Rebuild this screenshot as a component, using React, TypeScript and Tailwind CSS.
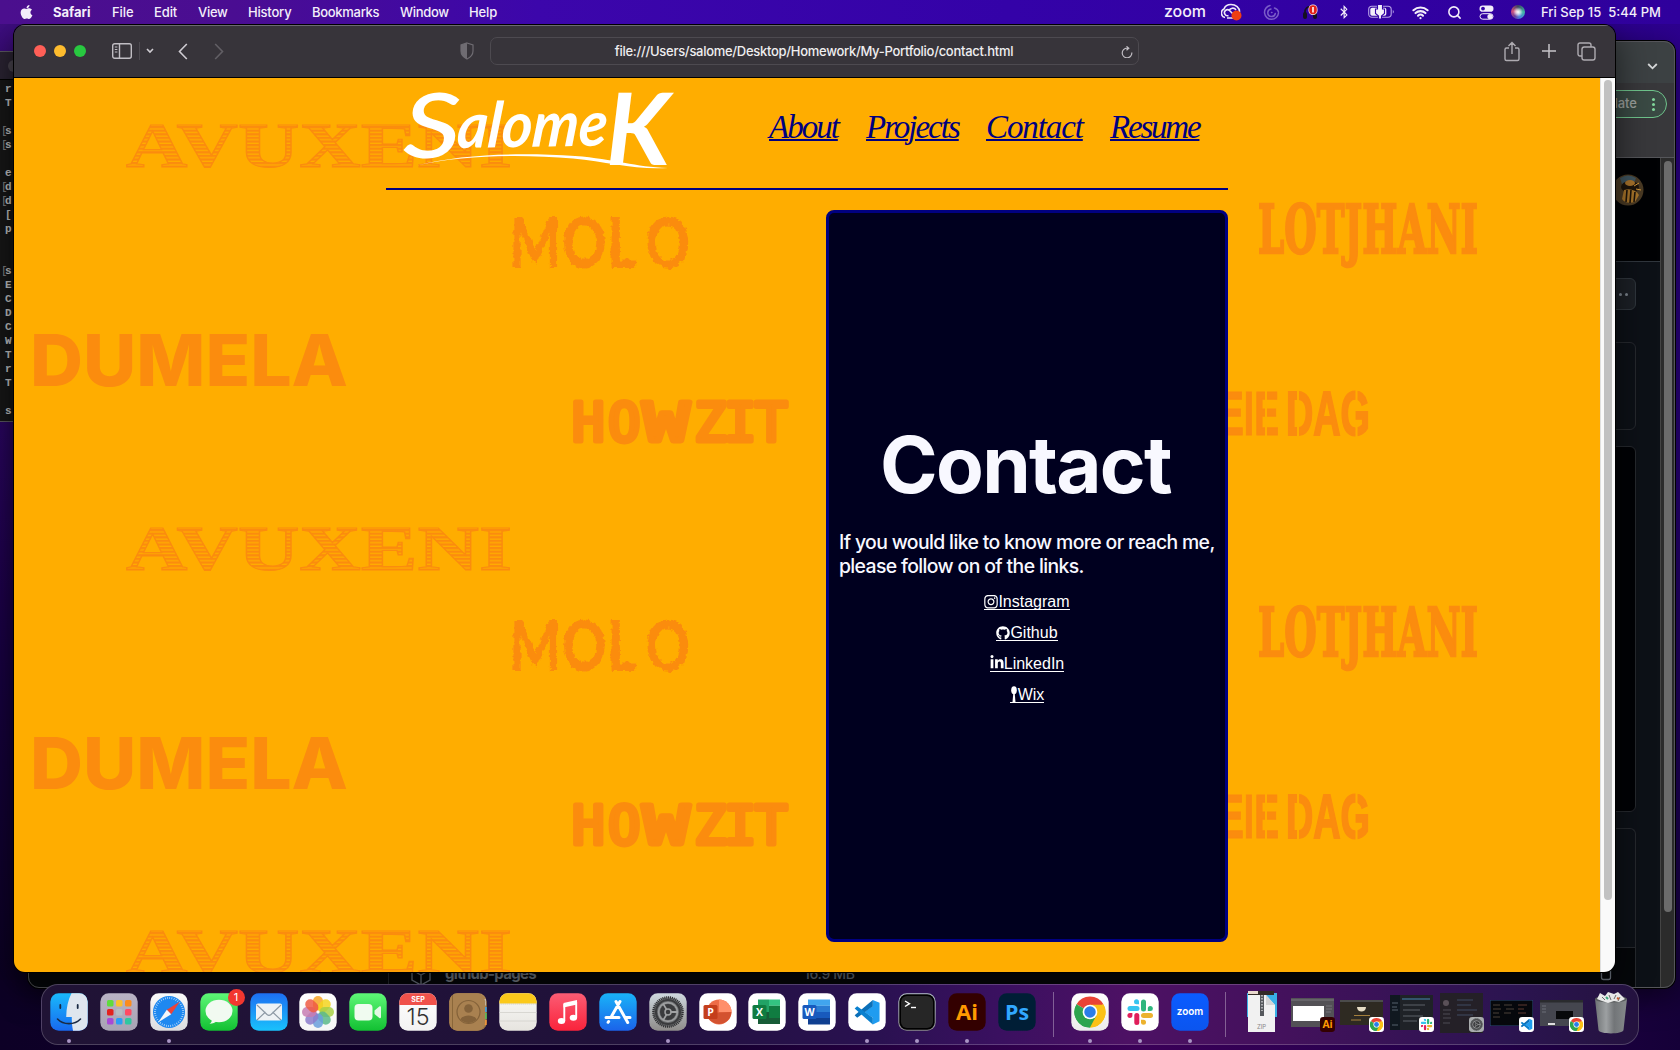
import React from "react";
import { FaInstagram, FaGithub, FaLinkedinIn, FaApple, FaBluetoothB } from "react-icons/fa";
import { Search, Wifi } from "lucide-react";

type P = { s?: number };

const Tile = ({ id, from, to, children }: { id: string; from: string; to: string; children?: React.ReactNode }) => (
  <svg width="38" height="38" viewBox="0 0 38 38" className="block shrink-0">
    <defs>
      <linearGradient id={id} x1="0" y1="0" x2="0" y2="1">
        <stop offset="0" stopColor={from} />
        <stop offset="1" stopColor={to} />
      </linearGradient>
    </defs>
    <rect x=".3" y=".3" width="37.4" height="37.4" rx="8.5" fill={`url(#${id})`} />
    {children}
  </svg>
);

const ChromeMark = ({ s = 30 }: P) => (
  <svg width={s} height={s} viewBox="0 0 30 30" x={19 - s / 2} y={19 - s / 2}>
    <path d="M15 15 L2.4 7.7 A14.5 14.5 0 0 1 27.6 7.7 Z" fill="#ea4335" />
    <path d="M15 15 L27.6 7.7 A14.5 14.5 0 0 1 15 29.5 Z" fill="#fbbc05" />
    <path d="M15 15 L15 29.5 A14.5 14.5 0 0 1 2.4 7.7 Z" fill="#34a853" />
    <path d="M15 8.2 H27.8 A14.5 14.5 0 0 1 15 29.5 L20.9 18.4 Z" fill="#fbc116" />
    <path d="M9.1 18.4 L2.4 7.7 A14.5 14.5 0 0 0 15 29.5 L20.9 18.4 Z" fill="#2da44e" />
    <circle cx="15" cy="15" r="6.9" fill="#fff" />
    <circle cx="15" cy="15" r="5.4" fill="#2b7de9" />
  </svg>
);

const SlackMark = ({ s = 26 }: P) => (
  <svg width={s} height={s} viewBox="0 0 26 26" x={19 - s / 2} y={19 - s / 2}>
    <g strokeWidth="5" strokeLinecap="round">
      <path d="M3 9.5h7" stroke="#36c5f0" />
      <path d="M16.5 3v7" stroke="#2eb67d" />
      <path d="M16.5 16.5h7" stroke="#ecb22e" />
      <path d="M9.8 16.5v7" stroke="#e01e5a" />
    </g>
    <path d="M9.8 5.3H9.5a2.5 2.5 0 1 1 2.5-2.5v2.5z" fill="#36c5f0" />
    <path d="M20.8 12V9.5a2.5 2.5 0 1 1 2.5 2.5z" fill="#2eb67d" />
    <path d="M14 20.8h2.5a2.5 2.5 0 1 1-2.5 2.5z" fill="#ecb22e" />
    <path d="M5.4 14v2.5A2.5 2.5 0 1 1 2.9 14z" fill="#e01e5a" />
  </svg>
);

const CodeMark = ({ s = 28 }: P) => (
  <svg width={s} height={s} viewBox="0 0 28 28" x={19 - s / 2} y={19 - s / 2}>
    <path d="M20 1.5 L27 4.5 V23.5 L20 27 V20 L11.5 14 20 7.8z" fill="#1f9cf0" />
    <path d="M20 1.5 L1.2 17.3 3.8 20 20 8z" fill="#0a6fb8" />
    <path d="M1.2 10.4 L3.8 8 20 20 V27z" fill="#0a80cf" />
  </svg>
);

const GearMark = () => (
  <g>
    <circle cx="19" cy="19" r="14.6" fill="#6d6f71" stroke="#2e2f31" strokeWidth="2.4" strokeDasharray="1.1 .8" />
    <circle cx="19" cy="19" r="12" fill="none" stroke="#3a3b3d" strokeWidth="2.2" />
    <circle cx="19" cy="19" r="9.4" fill="none" stroke="#9a9c9d" strokeWidth="1.6" />
    <circle cx="19" cy="19" r="8" fill="#3a3b3d" />
    <circle cx="19" cy="19" r="3" fill="none" stroke="#a0a2a3" strokeWidth="1.5" />
    <path d="M22 19h6.6M17.5 16.4l-3.4-5.8M17.5 21.6l-3.4 5.8" stroke="#a0a2a3" strokeWidth="1.8" />
  </g>
);

const Finder = () => (
  <Tile id="fi" from="#19b9fb" to="#1869f0">
    <path d="M21.5.3H29.2a8.5 8.5 0 0 1 8.5 8.5v20.4a8.5 8.5 0 0 1-8.5 8.5H23c-1-5-1.3-9-1.2-13.8h-5.6C16.4 15 18 7 21.5.3z" fill="#dfe6ee" />
    <path d="M10.3 12v3M27.7 12v3" stroke="#1a2a44" strokeWidth="1.8" strokeLinecap="round" />
    <path d="M7.5 26c6 6.2 17 6.2 23 0" fill="none" stroke="#1a2a44" strokeWidth="1.6" strokeLinecap="round" />
  </Tile>
);

const padColors = ["#5fdc3c", "#fbc02d", "#fb8c1e", "#e3221f", "#b6bcc2", "#ff4a63", "#a849d6", "#2b9df4", "#2fc7a0"];
const Launchpad = () => (
  <Tile id="lp" from="#b9b3c4" to="#a8a3b4">
    {padColors.map((c, i) => (
      <rect key={i} x={7 + (i % 3) * 9} y={7 + Math.floor(i / 3) * 9} width="6.5" height="6.5" rx="1.6" fill={c} />
    ))}
  </Tile>
);

const Safari = () => (
  <Tile id="sf" from="#fafafa" to="#dcdcdf">
    <circle cx="19" cy="19" r="16" fill="#1e88f0" />
    <circle cx="19" cy="19" r="14" fill="none" stroke="#d9ecff" strokeWidth="2" strokeDasharray=".6 1.6" />
    <path d="M30 8.5 L16.8 16.8 21.2 21.2z" fill="#ee4238" />
    <path d="M8 29.5 L16.8 16.8 21.2 21.2z" fill="#f4f6f8" />
  </Tile>
);

const Messages = () => (
  <Tile id="ms" from="#5ef777" to="#12c032">
    <ellipse cx="19" cy="18" rx="13.5" ry="11.3" fill="#f1faf1" />
    <path d="M12 26c0 2.5-1 3.8-2.5 4.7 3.5 0 5.5-1 7-2.7z" fill="#f1faf1" />
  </Tile>
);

const Mail = () => (
  <Tile id="ml" from="#1d6ff2" to="#19c2fc">
    <rect x="6" y="10.5" width="26" height="17" rx="2" fill="#eef2f5" />
    <path d="M7 12l10 9.5c1.3 1.1 2.7 1.1 4 0L31 12M7 27l8.5-8M31 27l-8.5-8" fill="none" stroke="#8b97a3" strokeWidth="1.1" />
  </Tile>
);

const petals = ["#f7a326", "#f3d51f", "#a8cf45", "#5cb98a", "#6a9fdc", "#8c7ccb", "#c77bb2", "#ee5a44"];
const Photos = () => (
  <Tile id="ph" from="#ffffff" to="#f6f6f6">
    {petals.map((c, i) => (
      <rect key={c} x="14" y="3" width="10" height="14.5" rx="5" fill={c} opacity=".85" transform={`rotate(${i * 45} 19 19)`} />
    ))}
  </Tile>
);

const FaceTime = () => (
  <Tile id="ft" from="#5ef777" to="#12c032">
    <rect x="5.5" y="11" width="18" height="16.5" rx="4" fill="#f0fbf0" />
    <path d="M25.5 17.5l4.8-4c1-.7 1.7-.3 1.7.8v9.8c0 1.1-.7 1.5-1.7.8l-4.8-4z" fill="#e3f8e5" />
  </Tile>
);

const Calendar = () => (
  <Tile id="cl" from="#ffffff" to="#f2f2f2">
    <path d="M.3 12V8.8A8.5 8.5 0 0 1 8.8.3h20.4a8.5 8.5 0 0 1 8.5 8.5V12z" fill="#f0524b" />
    <text x="19" y="9.2" textAnchor="middle" fontSize="7" fontWeight="700" fill="#fff" fontFamily="Inter, sans-serif">SEP</text>
    <text x="19" y="31.5" textAnchor="middle" fontSize="23" fontWeight="300" fill="#333" fontFamily="Inter, sans-serif" textLength="23" lengthAdjust="spacingAndGlyphs">15</text>
  </Tile>
);

const Contacts = () => (
  <Tile id="ct" from="#b28a55" to="#9b7440">
    <path d="M34.5 6h2.2v6.5h-2.2z" fill="#d0d0d0" />
    <path d="M35 14h2.7v5H35z" fill="#3aa0e8" />
    <path d="M35 20h2.7v6H35z" fill="#57c05a" />
    <path d="M35 27h2.7v5H35z" fill="#f0953a" />
    <rect x=".3" y=".3" width="35.8" height="37.4" rx="8" fill="#a98150" />
    <path d="M3.5 2v34" stroke="#8a673a" />
    <circle cx="19.5" cy="19" r="11.5" fill="none" stroke="#84623a" strokeWidth="1.2" />
    <circle cx="19.5" cy="15.5" r="4.3" fill="#84623a" />
    <path d="M11.5 26.5c2-5.5 14-5.5 16 0a11 11 0 0 1-16 0z" fill="#84623a" />
  </Tile>
);

const Notes = () => (
  <Tile id="nt" from="#fafaf8" to="#e6e4df">
    <path d="M.3 10.5V8.8A8.5 8.5 0 0 1 8.8.3h20.4a8.5 8.5 0 0 1 8.5 8.5v1.7z" fill="#fbc91b" />
    <path d="M.3 19.5h37.4M.3 28h37.4" stroke="#d2d0cb" strokeWidth=".8" />
    <path d="M.3 11h37.4" stroke="#b9b5a4" strokeWidth=".7" strokeDasharray="1 1" />
  </Tile>
);

const Music = () => (
  <Tile id="mu" from="#fb5c74" to="#fa233b">
    <path d="M14.5 10l13.5-3v4.5l-13.5 3z" fill="#fff" />
    <path d="M15.3 11v17M27.2 9v15.5" stroke="#fff" strokeWidth="1.9" />
    <ellipse cx="12.5" cy="28" rx="3.7" ry="3" fill="#fff" />
    <ellipse cx="24.4" cy="24.8" rx="3.7" ry="3" fill="#fff" />
  </Tile>
);

const AppStore = () => (
  <Tile id="as" from="#19b3f8" to="#1b63ea">
    <g stroke="#fff" strokeWidth="3" strokeLinecap="round" fill="none">
      <path d="M21 8.5L12.7 23M9.6 28.5l-.5.8M17 8.5L28.7 29.5M7 24.5h13M26.5 24.5H31" />
    </g>
  </Tile>
);

const Settings = () => (
  <Tile id="st" from="#cfd8de" to="#8e8c8a">
    <GearMark />
  </Tile>
);

const OfficeLetter = ({ c, t }: { c: string; t: string }) => (
  <g>
    <rect x="4.5" y="12" width="14" height="14" rx="1.5" fill={c} />
    <text x="11.5" y="23" textAnchor="middle" fontSize="10.5" fontWeight="700" fill="#fff" fontFamily="Open Sans, sans-serif">{t}</text>
  </g>
);

const PowerPoint = () => (
  <Tile id="pp" from="#ffffff" to="#ffffff">
    <circle cx="20" cy="19" r="12.5" fill="#ed6c47" />
    <path d="M20 6.5A12.5 12.5 0 0 1 32.5 19H20z" fill="#ff8f6b" />
    <path d="M32.5 19A12.5 12.5 0 0 1 7.6 20z" fill="#d35230" />
    <OfficeLetter c="#c43e1c" t="P" />
  </Tile>
);
const Excel = () => (
  <Tile id="xl" from="#ffffff" to="#ffffff">
    <path d="M10 6.5h11V19H10z" fill="#21a366" />
    <path d="M21 6.5h11v6.3H21z" fill="#33c481" />
    <path d="M21 12.8h11V19H21z" fill="#107c41" />
    <path d="M10 19h22v12H10z" fill="#185c37" />
    <path d="M21 19h11v6H21z" fill="#107c41" />
    <OfficeLetter c="#107c41" t="X" />
  </Tile>
);
const Word = () => (
  <Tile id="wd" from="#ffffff" to="#ffffff">
    <path d="M10 6.5h22v6.3H10z" fill="#41a5ee" />
    <path d="M10 12.8h22V19H10z" fill="#2b7cd3" />
    <path d="M10 19h22v6H10z" fill="#185abd" />
    <path d="M10 25h22v6.5H10z" fill="#103f91" />
    <OfficeLetter c="#185abd" t="W" />
  </Tile>
);
const Code = () => (
  <Tile id="vs" from="#ffffff" to="#ffffff">
    <CodeMark s={27} />
  </Tile>
);
const Terminal = () => (
  <Tile id="tm" from="#b8c4cc" to="#8b8b8b">
    <rect x="1.3" y="1.3" width="35.4" height="35.4" rx="7.5" fill="#000" />
    <rect x="3" y="3" width="32" height="32" rx="6" fill="#262626" />
    <path d="M7 8l4.5 2.7L7 13.5" fill="none" stroke="#fff" strokeWidth="1.4" />
    <path d="M13 14.5h5" stroke="#fff" strokeWidth="1.4" />
  </Tile>
);
const Illustrator = () => (
  <Tile id="ai" from="#330000" to="#330000">
    <text x="19" y="26.5" textAnchor="middle" fontSize="21" fontWeight="700" fill="#ff9a00" fontFamily="Open Sans, sans-serif" textLength="22" lengthAdjust="spacingAndGlyphs">Ai</text>
  </Tile>
);
const Photoshop = () => (
  <Tile id="ps" from="#001e36" to="#001e36">
    <text x="19" y="26.5" textAnchor="middle" fontSize="21" fontWeight="700" fill="#31a8ff" fontFamily="Open Sans, sans-serif" textLength="24" lengthAdjust="spacingAndGlyphs">Ps</text>
  </Tile>
);
const Chrome = () => (
  <Tile id="cr" from="#ffffff" to="#ececec">
    <ChromeMark s={32} />
  </Tile>
);
const Slack = () => (
  <Tile id="sl" from="#ffffff" to="#ffffff">
    <SlackMark s={26} />
  </Tile>
);
const Zoom = () => (
  <Tile id="zm" from="#0b5cff" to="#0b55ef">
    <text x="19" y="22.3" textAnchor="middle" fontSize="11" fontWeight="600" fill="#fff" fontFamily="Inter, sans-serif" textLength="26.5" lengthAdjust="spacingAndGlyphs">zoom</text>
  </Tile>
);

const Zip = () => (
  <svg width="30" height="42" viewBox="0 0 30 42">
    <path d="M0 2h30v24H0z" fill="#39b0e6" />
    <path d="M1 0h26v4H1z" fill="#332a26" />
    <path d="M1 0h10v3H1z" fill="#e8d8cc" />
    <path d="M1 4h18l9 10v27H1z" fill="#f1f1f1" />
    <path d="M19 4v10h9z" fill="#d4d4d4" />
    <rect x="13" y="4" width="4" height="21" fill="#55585c" />
    <path d="M15 4v16" stroke="#c6c8ca" strokeWidth="1.5" strokeDasharray="1.5 1.5" />
    <text x="14.5" y="38" textAnchor="middle" fontSize="6" fill="#8a8a8a" fontFamily="Inter, sans-serif">ZIP</text>
  </svg>
);

const Trash = () => (
  <svg width="34" height="44" viewBox="0 0 34 44">
    <defs>
      <linearGradient id="can">
        <stop offset="0" stopColor="#6e7274" />
        <stop offset=".35" stopColor="#9da0a2" />
        <stop offset=".6" stopColor="#727578" />
        <stop offset="1" stopColor="#868a8c" />
      </linearGradient>
    </defs>
    <path d="M1 8l3.5 31c.5 4.5 24.5 4.5 25 0L33 8z" fill="url(#can)" />
    <ellipse cx="17" cy="8" rx="16" ry="3.5" fill="#575a5c" />
    <path d="M3 8l3-6 5 3 3-4 6 2 4-2 4 4 3 3-6 3-5-1-6 2-6-2z" fill="#e8e8e8" />
    <path d="M8 6l3 3M15 4l2 5M22 4l-2 4M26 6l-2 4" stroke="#6b6b6b" />
    <path d="M12 6l2 2" stroke="#3aa77a" strokeWidth="2" />
    <path d="M23 7l2 1" stroke="#c65a2f" strokeWidth="2" />
  </svg>
);

const Badge = ({ bg = "#fff", children }: { bg?: string; children: React.ReactNode }) => (
  <svg width="15" height="15" viewBox="0 0 38 38" className="absolute -right-px bottom-[4px]">
    <rect width="38" height="38" rx="8" fill={bg} />
    {children}
  </svg>
);

/* Minimised window previews */
const Mini = ({ h, y, children, badge }: { h: number; y: number; children: React.ReactNode; badge: React.ReactNode }) => (
  <div className="relative h-[45px] w-[43px]">
    <svg width="43" height="45" viewBox="0 0 43 45" className="block">
      <svg x="0" y={y} width="43" height={h}>{children}</svg>
    </svg>
    {badge}
  </div>
);

const miniAi = (
  <Mini y={7} h={29} badge={<Badge bg="#330000"><text x="19" y="29" textAnchor="middle" fontSize="26" fontWeight="700" fill="#ff9a00" fontFamily="Open Sans, sans-serif">Ai</text></Badge>}>
    <rect width="43" height="29" fill="#535156" />
    <rect x="2" y="8" width="31" height="15" fill="#fff" />
    <path d="M0 2h43" stroke="#7a787c" />
    <path d="M35 8h6M35 11h6M35 14h5" stroke="#77757a" />
  </Mini>
);
const miniCafe = (
  <Mini y={9} h={25} badge={<Badge><ChromeMark s={34} /></Badge>}>
    <rect width="43" height="25" fill="#2e2a22" />
    <path d="M0 1h43" stroke="#4b4b4b" strokeWidth="2" />
    <path d="M17 7h9c0 6-9 6-9 0z" fill="#e6dcc4" />
    <path d="M14 15.5h16M11 20h10" stroke="#a5803c" />
  </Mini>
);
const miniSlack = (
  <Mini y={4} h={35} badge={<Badge><SlackMark s={30} /></Badge>}>
    <rect width="43" height="35" fill="#1f2227" />
    <rect width="10" height="35" fill="#101820" />
    <path d="M2 8h6M2 12h5M2 15h6M2 30h6" stroke="#55606c" />
    <path d="M13 10h22M13 15h17M13 21h20M13 26h14" stroke="#5c6168" strokeWidth="1" />
    <path d="M12 4h28" stroke="#34546b" strokeWidth="2" />
  </Mini>
);
const miniPrefs = (
  <Mini y={2} h={40} badge={<Badge bg="#a9acae"><GearMark /></Badge>}>
    <rect width="43" height="40" fill="#242027" />
    <circle cx="6" cy="10" r="3" fill="#5a5058" />
    <path d="M3 17h8M3 21h7M3 25h8M3 30h7" stroke="#4c4a55" />
    <path d="M17 7h16M17 12h14M17 17h20M17 22h16" stroke="#3e4a62" />
  </Mini>
);
const miniCode = (
  <Mini y={9} h={26} badge={<Badge><CodeMark s={32} /></Badge>}>
    <rect width="43" height="26" fill="#06080c" stroke="#2c4b7c" />
    <path d="M3 5h7M3 9h8M3 13h6M3 17h7M14 5h8M16 9h8M14 13h7" stroke="#4a4038" />
    <path d="M28 5h9M28 9h6M28 13h8" stroke="#5c3830" />
  </Mini>
);
const miniWeb = (
  <Mini y={9} h={26} badge={<Badge><ChromeMark s={34} /></Badge>}>
    <rect width="43" height="26" fill="#45464f" />
    <path d="M0 1h43" stroke="#2a2b2e" strokeWidth="3" />
    <rect x="16" y="11" width="17" height="8" fill="#08090b" />
    <path d="M2 6h4M2 9h4M2 12h4" stroke="#6d6e78" />
    <path d="M8 24h7" stroke="#dedede" strokeWidth="2" />
  </Mini>
);

const apps: { node: React.ReactNode; on?: boolean; badge?: string }[] = [
  { node: <Finder />, on: true },
  { node: <Launchpad /> },
  { node: <Safari />, on: true },
  { node: <Messages />, badge: "1" },
  { node: <Mail /> },
  { node: <Photos /> },
  { node: <FaceTime /> },
  { node: <Calendar /> },
  { node: <Contacts /> },
  { node: <Notes /> },
  { node: <Music /> },
  { node: <AppStore /> },
  { node: <Settings />, on: true },
  { node: <PowerPoint /> },
  { node: <Excel /> },
  { node: <Word /> },
  { node: <Code />, on: true },
  { node: <Terminal />, on: true },
  { node: <Illustrator />, on: true },
  { node: <Photoshop /> },
];
const running = [<Chrome />, <Slack />, <Zoom />];
const shelf = [<Zip />, miniAi, miniCafe, miniSlack, miniPrefs, miniCode, miniWeb, <Trash />];

const Slot = ({ children, on, badge }: { children: React.ReactNode; on?: boolean; badge?: string }) => (
  <div className="relative flex w-[49.9px] shrink-0 flex-col items-center pt-[8px]">
    {children}
    {on && <span className="mt-[8px] size-[4px] rounded-full bg-[#a995c4]" />}
    {badge && (
      <span className="absolute top-[4px] -right-px flex size-[17px] items-center justify-center rounded-full bg-[#f2372f] text-[11px] text-white">
        {badge}
      </span>
    )}
  </div>
);

const Dock = () => (
  <div className="absolute top-[984px] left-[41px] flex h-[61px] w-[1598px] rounded-[17px] border border-[#ffffff33] bg-[linear-gradient(90deg,#201335_0%,#20113a_35%,#291150_52%,#3a1060_60%,#4d1164_68%,#43115c_78%,#2b1450_92%,#24123f_100%)] pl-[2px]">
    {apps.map((a, i) => (
      <Slot key={i} on={a.on} badge={a.badge}>{a.node}</Slot>
    ))}
    <div className="flex w-[23px] shrink-0 justify-center pt-[7px]"><span className="h-[45px] w-px bg-[#ffffff55]" /></div>
    {running.map((n, i) => <Slot key={i} on>{n}</Slot>)}
    <div className="flex w-[23px] shrink-0 justify-center pt-[7px]"><span className="h-[45px] w-px bg-[#ffffff55]" /></div>
    {shelf.map((n, i) => (
      <div key={i} className="flex w-[49.8px] shrink-0 justify-center pt-[6px]">{n}</div>
    ))}
  </div>
);

const MenuBar = () => (
  <div className="absolute inset-x-0 top-0 flex h-[24px] items-center bg-[linear-gradient(90deg,#4b0f8e_0%,#4a0d92_14%,#3c06ab_32%,#3402a8_60%,#2f009c_100%)] pl-[19px] text-[13px] leading-[22px] font-medium tracking-[-0.1px] whitespace-nowrap text-[#f3eefa]">
    <FaApple className="w-[15px] text-[16px]" />
    <span className="ml-[19px] w-[59px] font-bold tracking-[0px]">Safari</span>
    <span className="w-[42px]">File</span>
    <span className="w-[44px]">Edit</span>
    <span className="w-[50px] tracking-[-0.3px]">View</span>
    <span className="w-[64px] tracking-[-0.2px]">History</span>
    <span className="w-[88px] tracking-[-0.3px]">Bookmarks</span>
    <span className="w-[69px] tracking-[-0.3px]">Window</span>
    <span>Help</span>
    <div className="ml-auto flex w-[516px] items-center">
      <span className="w-[57px] pb-[2px] text-[16px] leading-[16px] tracking-[-0.1px]">zoom</span>
      <svg width="22" height="18" viewBox="0 0 22 18" className="mr-[20px]">
        <path d="M4 14.5a4.5 4.5 0 0 1-1-8.5C4 3 7 1.5 10 1.5c5 0 8.5 3.5 8.5 7s-3 6.5-6 6.5H6" fill="none" stroke="#eee9f8" strokeWidth="1.6" />
        <path d="M13 12L8.5 7.5a3 3 0 1 0-1 5M8 8c1-3 5-4 7-1" fill="none" stroke="#eee9f8" strokeWidth="1.6" />
        <circle cx="15.5" cy="12.5" r="5" fill="#f03e13" />
      </svg>
      <svg width="17" height="17" viewBox="0 0 17 17" className="mr-[23px]" fill="none" stroke="#7a5cc8" strokeWidth="1.5" strokeLinecap="round">
        <path d="M7 1.5A7 7 0 1 0 15.5 9M8 5a3.8 3.8 0 1 0 4.3 4.5M8.5 8.5h.5M11.5 4c2 .6 3.5 2 4 4" />
      </svg>
      <svg width="15" height="17" viewBox="0 0 15 17" className="mr-[21px]">
        <path d="M2 9V8C2 1 12 1 12 8v1" fill="none" stroke="#15101f" strokeWidth="1.8" />
        <rect x="0" y="8" width="4" height="7" rx="2" fill="#15101f" />
        <rect x="10" y="8" width="4" height="7" rx="2" fill="#15101f" />
        <rect x="5.5" y=".5" width="9" height="10.5" rx="4.4" fill="#f4eef0" />
        <rect x="6.2" y="1.2" width="7.6" height="9.1" rx="3.7" fill="#e3201b" />
        <path d="M10 3v5.5" stroke="#fff" strokeWidth="1.6" />
      </svg>
      <FaBluetoothB className="mr-[19px] w-[10px] text-[14px]" />
      <svg width="27" height="14" viewBox="0 0 27 14" className="mr-[17px]">
        <rect x=".7" y="1.2" width="22.5" height="11" rx="3.2" fill="none" stroke="#b7a2e6" strokeWidth="1.1" />
        <rect x="2.3" y="2.8" width="16" height="8" rx="1.8" fill="#f3eefa" />
        <path d="M9.5 0v4H7.5v4.5l3 2.5v3h3v-3l3-2.5V4h-2V0" fill="#f3eefa" stroke="#3402a8" strokeWidth="1.1" />
        <path d="M24.8 5v3.6c1.4-.6 1.4-3 0-3.6z" fill="#b7a2e6" />
      </svg>
      <Wifi className="mr-[18px] size-[17px]" strokeWidth={3} />
      <Search className="mr-[17px] size-[15px]" strokeWidth={2.5} />
      <svg width="15" height="15" viewBox="0 0 15 15" className="mr-[17px]">
        <rect x=".5" y=".5" width="14" height="6.3" rx="3.15" fill="#f3eefa" />
        <circle cx="4" cy="3.6" r="1.9" fill="#3402a8" />
        <rect x="1" y="8.7" width="13" height="5.5" rx="2.75" fill="none" stroke="#f3eefa" />
        <circle cx="11" cy="11.5" r="2.6" fill="#f3eefa" />
      </svg>
      <span className="mr-[16px] size-[14px] rounded-full bg-[radial-gradient(circle,#ffffff_0%,#ffffffaa_22%,#ffffff00_50%),conic-gradient(#3b4460,#3fb7a4_25%,#4a7fe0_45%,#6a3f9c_60%,#d0507c_78%,#3b4460)]" />
      <span className="tracking-[0px] whitespace-pre">Fri Sep 15  5:44 PM</span>
    </div>
  </div>
);

const shell = ["r", "T", "", "[s", "[s", "", "e", "[d", "[d", " [", "p", "", "", "[s", "E", "C", "D", "C", "W", "T", "r", "T", "", "s"];
const TerminalWindow = () => (
  <div className="absolute top-[51px] -left-[10px] h-[371px] w-[120px] overflow-hidden rounded-[10px] border border-[#5b5960] bg-[#171717]">
    <div className="flex h-[28px] items-center border-b border-black bg-[#2b2433] pl-[17px]">
      <span className="size-[12px] rounded-full bg-[#4b4650]" />
    </div>
    <div className="pt-[2px] pl-[10px] font-['Liberation_Mono',monospace] text-[11px] leading-[14px] font-bold text-[#c9c9c9]">
      {shell.map((l, i) => (
        <div key={i} className="flex h-[14px] whitespace-pre">
          <span className="w-[4px] font-normal text-[#8a8a8a]">{l[0] === "[" ? "[" : ""}</span>
          <span>{l[0] === "[" ? l.slice(1) : l.trim()}</span>
        </div>
      ))}
    </div>
  </div>
);

const BrowserBehind = () => (
  <div className="absolute top-[41px] left-[28px] flex h-[947px] w-[1647px] flex-col overflow-hidden rounded-[11px] bg-[#0d1117] shadow-[0_0_0_1px_#000,0_8px_30px_#0008] outline outline-[#55555a] -outline-offset-1">
    <div className="flex h-[42px] shrink-0 items-center justify-end bg-[#3c4143] pt-[8px] pr-[17px]">
      <svg width="11" height="7" viewBox="0 0 11 7"><path d="M1.2 1l4.3 4.3L9.8 1" fill="none" stroke="#d5d7d8" strokeWidth="1.8" /></svg>
    </div>
    <div className="flex h-[75px] shrink-0 justify-end border-b border-[#55565a] bg-[#38383b] pt-[7px] pr-[8px]">
      <div className="flex h-[28px] w-[120px] items-center justify-end rounded-full border border-[#6fc58c] bg-[#3a4a44] pr-[11px] text-[13px] font-medium text-[#9aa09d]">
        Update
        <span className="ml-[15px] flex flex-col gap-[2px]">
          <i className="size-[3px] rounded-full bg-[#81d69b]" />
          <i className="size-[3px] rounded-full bg-[#81d69b]" />
          <i className="size-[3px] rounded-full bg-[#81d69b]" />
        </span>
      </div>
    </div>
    <div className="flex min-h-0 flex-1">
      <div className="flex min-w-0 flex-1 flex-col">
        <div className="flex h-[104px] shrink-0 justify-end border-b border-[#30363d] bg-[#010204] pt-[16px] pr-[16px]">
          <svg width="32" height="32" viewBox="0 0 32 32">
            <circle cx="16" cy="16" r="15.5" fill="#4a3a24" />
            <path d="M8 4a15 15 0 0 1 16 0l-3 8-10 1z" fill="#3f5560" />
            <ellipse cx="18" cy="13" rx="9" ry="6" fill="#1d140b" />
            <ellipse cx="18" cy="9" rx="5" ry="3" fill="#a9742c" />
            <path d="M12 16c6-2 12 0 15 5l-4 7c-7 2-11 0-13-3z" fill="#a8752a" />
            <path d="M15 16l-1 12M19 16l-1 13M23 18l-1 10" stroke="#1d140b" strokeWidth="1.6" />
            <path d="M22 12l5-3M24 15l5 1" stroke="#d89a3a" />
          </svg>
        </div>
        <div className="mt-[16px] mr-[24px] flex h-[32px] shrink-0 items-center justify-end gap-[3px] rounded-[6px] border border-[#30363d] bg-[#1c2026] pr-[7px]">
          <i className="size-[3px] rounded-full bg-[#7d858e]" />
          <i className="size-[3px] rounded-full bg-[#7d858e]" />
          <i className="size-[3px] rounded-full bg-[#7d858e]" />
        </div>
        <div className="mt-[32px] mr-[24px] h-[88px] shrink-0 rounded-[6px] border border-[#26292e]" />
        <div className="mt-[16px] mr-[24px] h-[366px] shrink-0 rounded-[6px] border border-[#26292e] bg-[#010205]" />
        <div className="mt-[16px] mr-[24px] flex flex-1 flex-col rounded-t-[6px] border border-b-0 border-[#26292e]">
          <div className="h-[119px] shrink-0 border-b border-[#26292e]" />
          <div className="flex flex-1 bg-[#05070a]">
            <div className="w-[360px] border-r border-[#26292e]" />
            <div className="flex flex-1 items-start pt-[16px] pl-[22px]">
              <svg width="20" height="22" viewBox="0 0 20 22" fill="none" stroke="#6e7681" strokeWidth="1.4"><path d="M10 1l9 5v10l-9 5-9-5V6zM1 6l9 5 9-5M10 11v10" /></svg>
              <span className="ml-[14px] w-[359px] text-[15px] leading-[20px] font-bold tracking-[-0.7px] text-[#7d858e]">github-pages</span>
              <span className="text-[14px] leading-[20px] font-medium tracking-[-0.3px] text-[#6e7681]">16.9 MB</span>
              <svg width="12" height="18" viewBox="0 0 12 18" className="mr-[23px] ml-auto" fill="none" stroke="#6e7681" strokeWidth="1.3"><path d="M1.5 2v11.5a2 2 0 0 0 2 2h5a2 2 0 0 0 2-2V2" /></svg>
            </div>
          </div>
        </div>
      </div>
      <div className="flex w-[15px] justify-center border-l border-[#444] bg-[#2b2b2b] pt-[3px]">
        <div className="h-[751px] w-[8px] rounded-full bg-[#6b6b6b]" />
      </div>
    </div>
  </div>
);

/* One repeat of the greetings backdrop */
const Greetings = ({ dy }: { dy: number }) => (
  <g transform={`translate(0 ${dy})`} fill="#fb8c0e">
    <text x="126" y="167" fontFamily="Liberation Serif, serif" fontWeight="700" fontSize="64" textLength="386" lengthAdjust="spacingAndGlyphs" fill="url(#engrave)" stroke="#fb8c0e" strokeWidth="1.1">AVUXENI</text>
    <text x="30" y="386" fontFamily="Inter, sans-serif" fontWeight="800" fontSize="72" textLength="318" lengthAdjust="spacingAndGlyphs">DUMELA</text>
    <text transform="scale(.78 1)" x="653 721 779 828" y="268" fontFamily="Lato, sans-serif" fontWeight="900" fontSize="70" filter="url(#rough)">MOLO</text>
    <g fontFamily="DejaVu Sans Mono, monospace" fontSize="54" stroke="#fb8c0e" strokeWidth="5" strokeLinejoin="round">
      <text x="572 608" y="440.5">HO</text>
      <text x="643" y="440.5" textLength="46" lengthAdjust="spacingAndGlyphs">W</text>
      <text x="694 724 755" y="440.5">ZIT</text>
    </g>
    <text x="1258" y="252.5" fontFamily="DejaVu Serif, serif" fontWeight="700" fontSize="67" textLength="220" lengthAdjust="spacingAndGlyphs" stroke="#fb8c0e" strokeWidth="2.5">LOTJHANI</text>
    <text x="1219" y="435" fontFamily="Liberation Sans, sans-serif" fontWeight="700" fontSize="63" textLength="60" lengthAdjust="spacingAndGlyphs" stroke="#fb8c0e" strokeWidth="1.2">EIE</text>
    <text x="1286" y="435" fontFamily="Liberation Sans, sans-serif" fontWeight="700" fontSize="63" textLength="84" lengthAdjust="spacingAndGlyphs" stroke="#fb8c0e" strokeWidth="2">DAG</text>
    <path d="M1266 388v50M1298 388v50M1356.5 388v14M1356.5 424v14" stroke="#ffad00" strokeWidth="2" />
  </g>
);

const Backdrop = () => (
  <svg className="absolute inset-0" width="1586" height="894" viewBox="14 78 1586 894">
    <defs>
      <pattern id="engrave" width="6" height="3.6" patternUnits="userSpaceOnUse">
        <rect width="6" height="2.3" fill="#fb8c0e" />
      </pattern>
      <filter id="rough">
        <feTurbulence type="fractalNoise" baseFrequency=".16" numOctaves="3" result="n" />
        <feDisplacementMap in="SourceGraphic" in2="n" scale="7" xChannelSelector="R" yChannelSelector="G" />
      </filter>
    </defs>
    <Greetings dy={0} />
    <Greetings dy={403} />
    <Greetings dy={806} />
  </svg>
);

const Logo = () => (
  <svg width="276" height="84" viewBox="400 88 276 84" className="shrink-0">
    <g fill="#fff" fontFamily="Lato, sans-serif" fontStyle="italic" fontWeight="700">
      <text x="403" y="158" fontSize="90" fontWeight="500" textLength="58" lengthAdjust="spacingAndGlyphs">S</text>
      <text x="456" y="148" fontSize="63" textLength="150" lengthAdjust="spacingAndGlyphs" transform="rotate(-1 457 147) skewX(-6) translate(15.5 0)">alome</text>
      <text x="606" y="165" fontSize="99" textLength="64" lengthAdjust="spacingAndGlyphs">K</text>
    </g>
    <path d="M415 166c50-13 110-13 160-10 40 3 60 11 93 12-33 2-60-6-95-9.5-50-4-110-4-158 7.5z" fill="#fff" />
  </svg>
);

const links = [
  { icon: <FaInstagram className="inline-block w-[14px] align-[-2px] text-[15.5px]" />, label: "Instagram" },
  { icon: <FaGithub className="inline-block w-[14px] align-[-2px] text-[14px]" />, label: "Github" },
  { icon: <FaLinkedinIn className="inline-block w-[14px] align-[-1px] text-[15px]" />, label: "LinkedIn" },
  {
    icon: (
      <svg width="8" height="17" viewBox="0 0 8 17" className="inline-block align-[-3px]" fill="#fff">
        <ellipse cx="4" cy="4.2" rx="2.8" ry="3.9" />
        <path d="M3.3 7h1.4l.8 9.3H2.5z" />
      </svg>
    ),
    label: "Wix",
  },
];

const Page = () => (
  <div className="relative h-[894px] w-[1586px] overflow-hidden bg-[#ffad00]">
    <Backdrop />
    <div className="relative ml-[372px] w-[842px]">
      <header className="flex h-[112px] items-start border-b-2 border-[#000080] pt-[10px] pl-[14px]">
        <Logo />
        <nav className="ml-[93px] flex pt-[17px] font-['Liberation_Serif',serif] text-[33px] leading-[44px] text-[#000080] italic [&_a]:underline [&_a]:decoration-2 [&_a]:underline-offset-[1px]">
          <span className="w-[97px]"><a className="tracking-[-2px]">About</a></span>
          <span className="w-[120px]"><a className="tracking-[-2px]">Projects</a></span>
          <span className="w-[124px]"><a className="tracking-[-1.1px]">Contact</a></span>
          <span><a className="tracking-[-2.2px]">Resume</a></span>
        </nav>
      </header>
      <main className="mt-[20px] ml-[440px] flex h-[732px] w-[402px] flex-col rounded-[8px] border-[3px] border-[#000080] bg-[#00001f] px-[10px] text-[#f8f8ff]">
        <h1 className="mt-[204px] pr-[3px] text-center text-[78px] leading-[96px] font-[750] tracking-[-1.7px]">Contact</h1>
        <p className="mt-[17px] text-[19.4px] leading-[24px] font-medium tracking-[-0.63px] whitespace-nowrap">
          If you would like to know more or reach me,
          <br />
          please follow on of the links.
        </p>
        <ul className="mt-[8px] text-center font-['Liberation_Sans',sans-serif] text-[16px] leading-[31px] text-white">
          {links.map((l) => (
            <li key={l.label} className="h-[31px]">
              <a className="bg-[linear-gradient(#fff,#fff)] bg-[length:100%_1px] bg-[position:0_16px] bg-no-repeat">{l.icon}{l.label}</a>
            </li>
          ))}
        </ul>
      </main>
    </div>
  </div>
);

const Toolbar = () => (
  <div className="flex h-[53px] items-center border-b border-black bg-[#37343a] pl-[20px] shadow-[inset_0_1px_0_#6c6a70]">
    <div className="flex gap-[8px]">
      <i className="size-[12px] rounded-full bg-[#ff5f57]" />
      <i className="size-[12px] rounded-full bg-[#febc2e]" />
      <i className="size-[12px] rounded-full bg-[#28c840]" />
    </div>
    <svg width="20" height="16" viewBox="0 0 20 16" className="ml-[26px]" fill="none" stroke="#c0bdc3" strokeWidth="1.4">
      <rect x=".7" y=".7" width="18.6" height="14.6" rx="2" />
      <path d="M7.5 1v14" />
      <path d="M2.8 4h2.6M2.8 6.5h2.6M2.8 9h2.6" strokeWidth="1" />
    </svg>
    <span className="ml-[7px] h-[18px] w-px bg-[#4d4a50]" />
    <svg width="8" height="6" viewBox="0 0 8 6" className="ml-[6px]"><path d="M1 1l3 3 3-3" fill="none" stroke="#cfccd2" strokeWidth="1.6" /></svg>
    <svg width="10" height="17" viewBox="0 0 10 17" className="ml-[24px]"><path d="M8.8 1L1.5 8.5l7.3 7.5" fill="none" stroke="#cfccd2" strokeWidth="1.6" /></svg>
    <svg width="10" height="17" viewBox="0 0 10 17" className="ml-[26px]"><path d="M1.2 1l7.3 7.5L1.2 16" fill="none" stroke="#625f65" strokeWidth="1.6" /></svg>
    <svg width="14" height="18" viewBox="0 0 14 18" className="ml-[236px]">
      <path d="M7 1l6 2v6c0 4-3 6.5-6 8-3-1.5-6-4-6-8V3z" fill="none" stroke="#6f6c72" strokeWidth="1.2" />
      <path d="M7 1v16c-3-1.5-6-4-6-8V3z" fill="#6f6c72" />
    </svg>
    <div className="ml-[16px] flex h-[28px] w-[649px] items-center rounded-[7px] border border-[#4d4a50]">
      <span className="flex-1 pt-px pl-[16px] text-center text-[13px] font-medium tracking-[-0.29px] whitespace-nowrap text-[#efeef0]">
        file:///Users/salome/Desktop/Homework/My-Portfolio/contact.html
      </span>
      <svg width="12" height="12" viewBox="0 0 12 12" className="mt-px mr-[5px]" fill="none" stroke="#c0bdc3" strokeWidth="1.2">
        <path d="M10.8 6.5A4.8 4.8 0 1 1 6 2.2h1.5M5.5.3l2.3 1.9-2.3 2" />
      </svg>
    </div>
    <svg width="16" height="21" viewBox="0 0 16 21" className="ml-[365px]" fill="none" stroke="#aeabb1" strokeWidth="1.4">
      <path d="M5 7H2.5A1.5 1.5 0 0 0 1 8.5V18a1.5 1.5 0 0 0 1.5 1.5h11A1.5 1.5 0 0 0 15 18V8.5A1.5 1.5 0 0 0 13.5 7H11M8 13V1.5M4.5 5L8 1.5 11.5 5" />
    </svg>
    <svg width="14" height="14" viewBox="0 0 14 14" className="ml-[22px]" stroke="#c6c3c9" strokeWidth="1.5"><path d="M7 0v14M0 7h14" /></svg>
    <svg width="19" height="19" viewBox="0 0 19 19" className="ml-[21px]" fill="none" stroke="#aeabb1" strokeWidth="1.4">
      <rect x="5" y="5" width="13" height="13" rx="2.2" />
      <path d="M5 14H3a2 2 0 0 1-2-2V3a2 2 0 0 1 2-2h9a2 2 0 0 1 2 2v2" />
    </svg>
  </div>
);

const SafariWindow = () => (
  <div className="absolute top-[25px] left-[14px] h-[947px] w-[1601px] overflow-hidden rounded-[11px] shadow-[0_0_0_1px_#000,0_12px_35px_#0009]">
    <Toolbar />
    <div className="flex">
      <Page />
      <div className="h-[894px] w-[15px] border-l border-[#e0e0e0] bg-[#fafafa] pt-[2px] pl-[3px]">
        <div className="h-[820px] w-[8px] rounded-full bg-[#c1c1c1]" />
      </div>
    </div>
  </div>
);

export default function App() {
  return (
    <div className="relative h-[1050px] w-[1680px] overflow-hidden bg-[linear-gradient(180deg,#43108a_0%,#3a0c78_5%,#2a0660_40%,#170040_65%,#0d0026_90%,#0a001c_100%)] font-['Inter',sans-serif]">
      <div className="absolute inset-y-0 right-0 w-[400px] bg-[linear-gradient(180deg,#2d0090_0%,#28007c_40%,#1e0058_75%,#130035_100%)]" />
      <div className="absolute inset-x-0 bottom-0 h-[70px] bg-[linear-gradient(90deg,#0d0026_0%,#12002c_40%,#3a0058_68%,#2b0050_80%,#150038_100%)]" />
      <TerminalWindow />
      <BrowserBehind />
      <SafariWindow />
      <MenuBar />
      <Dock />
    </div>
  );
}
